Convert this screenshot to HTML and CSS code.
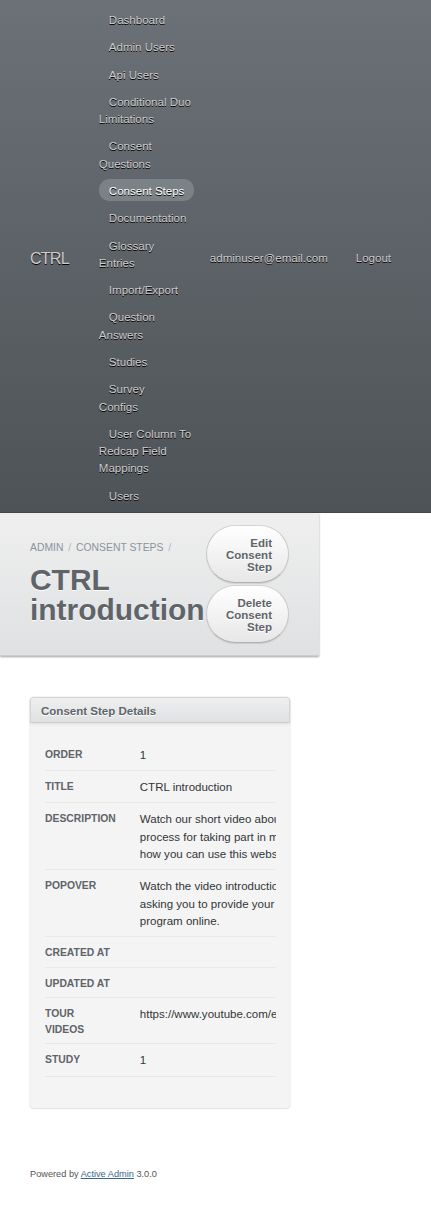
FILE: index.html
```
<!DOCTYPE html>
<html lang="en">
<head>
<meta charset="utf-8">
<title>CTRL introduction | CTRL</title>
<link rel="stylesheet" href="styles.css">
</head>
<body>
<div class="header">
  <h1 class="site-title">CTRL</h1>
  <ul class="tabs">
    <li><a href="#">Dashboard</a></li>
    <li><a href="#">Admin Users</a></li>
    <li><a href="#">Api Users</a></li>
    <li><a href="#">Conditional Duo Limitations</a></li>
    <li><a href="#">Consent Questions</a></li>
    <li class="current"><a href="#">Consent Steps</a></li>
    <li><a href="#">Documentation</a></li>
    <li><a href="#">Glossary Entries</a></li>
    <li><a href="#">Import/Export</a></li>
    <li><a href="#">Question Answers</a></li>
    <li><a href="#">Studies</a></li>
    <li><a href="#">Survey Configs</a></li>
    <li><a href="#">User Column To Redcap Field Mappings</a></li>
    <li><a href="#">Users</a></li>
  </ul>
  <ul class="utility-nav">
    <li><a href="#">adminuser@email.com</a></li>
    <li><a href="#">Logout</a></li>
  </ul>
</div>

<div class="title-bar">
  <div class="titlebar-left">
    <div class="breadcrumb"><a href="#">Admin</a> <span class="sep">/</span> <a href="#">Consent Steps</a> <span class="sep">/</span></div>
    <h2 class="page-title">CTRL introduction</h2>
  </div>
  <div class="action-items">
    <a class="button" href="#">Edit Consent Step</a>
    <a class="button" href="#">Delete Consent Step</a>
  </div>
</div>

<div class="main">
  <div class="panel">
    <h3 class="panel-title">Consent Step Details</h3>
    <div class="panel-body">
      <div class="attributes">
        <table>
          <tr><th>Order</th><td>1</td></tr>
          <tr><th>Title</th><td>CTRL introduction</td></tr>
          <tr><th>Description</th><td>Watch our short video about the research process for taking part in my programme, and how you can use this website.</td></tr>
          <tr><th>Popover</th><td>Watch the video introduction before we start asking you to provide your consent to join the program online.</td></tr>
          <tr><th>Created At</th><td></td></tr>
          <tr><th>Updated At</th><td></td></tr>
          <tr><th>Tour Videos</th><td>https://www.youtube.com/embed/4n8q2d6b0p3</td></tr>
          <tr><th>Study</th><td>1</td></tr>
        </table>
      </div>
    </div>
  </div>
</div>

<div class="footer">
  <p>Powered by <a href="#">Active Admin</a> 3.0.0</p>
</div>
</body>
</html>
```
FILE: styles.css
```
html, body {
  margin: 0;
  padding: 0;
}
body {
  font: 72%/150% "Liberation Sans", Arial, Helvetica, sans-serif;
  color: #323537;
  background: #ffffff;
}

/* Header */
.header {
  display: flex;
  align-items: center;
  padding: 12px 0 7px;
  background: linear-gradient(180deg, #6b7177 0%, #4e5357 100%);
  border-bottom: 1px solid #43474b;
}
.site-title {
  flex: none;
  margin: 0;
  padding: 0 30px;
  font-size: 1.4em;
  font-weight: normal;
  line-height: 150%;
  letter-spacing: -0.05em;
  color: #cdcdcd;
  text-shadow: #000 0 1px 0;
  white-space: nowrap;
}
.tabs {
  flex: none;
  width: 101px;
  list-style: none;
  margin: 0;
  padding: 0;
  display: flex;
  flex-direction: column;
  gap: 10px;
}
.tabs li {
  margin-right: 4px;
}
.tabs a {
  color: #cdcdcd;
  text-decoration: none;
  padding: 6px 10px 4px;
  border-radius: 10px;
  text-shadow: #000 0 1px 0;
}
.tabs li.current a {
  background: #7b8287;
  color: #ffffff;
}
.utility-nav {
  flex: 1;
  list-style: none;
  margin: 0;
  padding: 0 40px 0 0;
  display: flex;
  justify-content: flex-end;
  gap: 28px;
  white-space: nowrap;
}
.utility-nav a {
  color: #cdcdcd;
  text-decoration: none;
  text-shadow: #000 0 1px 0;
}

/* Title bar */
.title-bar {
  width: 319px;
  box-sizing: border-box;
  padding: 12px 30px;
  display: flex;
  align-items: center;
  background: linear-gradient(180deg, #efefef 0%, #dfe1e2 100%);
  border-bottom: 1px solid #cdcdcd;
  box-shadow: 0 1px 2px rgba(0, 0, 0, 0.37);
}
.titlebar-left {
  flex: 1;
  min-width: 0;
}
.breadcrumb {
  font-size: 0.9em;
  line-height: 10px;
  margin-bottom: 12px;
  color: #8a949e;
  text-transform: uppercase;
}
.breadcrumb a {
  color: #8a949e;
  text-decoration: none;
}
.breadcrumb .sep {
  margin: 0 2px;
  color: #b0b7be;
}
.page-title {
  margin: 0;
  font-size: 2.6em;
  line-height: 30px;
  font-weight: bold;
  color: #5e6469;
  text-shadow: #fff 0 1px 0;
}
.action-items {
  flex: 0 0 83px;
  display: flex;
  flex-direction: column;
  gap: 2px;
}
.button {
  display: block;
  box-sizing: border-box;
  width: 83px;
  padding: 11px 16px 9px;
  line-height: 12px;
  font-weight: bold;
  text-align: right;
  color: #5e6469;
  text-decoration: none;
  background: linear-gradient(180deg, #ffffff 0%, #e7e7e7 100%);
  border: 1px solid #c7c7c7;
  border-color: #d3d3d3 #c7c7c7 #b2b2b2;
  border-radius: 200px;
  box-shadow: 0 1px 1px rgba(0, 0, 0, 0.1), inset 0 1px 0 rgba(255, 255, 255, 0.8);
  text-shadow: #fff 0 1px 0;
}

/* Main content */
.main {
  width: 320px;
  box-sizing: border-box;
  padding: 41px 30px 0;
}
.panel {
  background: #f4f4f4;
  border-radius: 4px;
  box-shadow: 0 0 0 1px rgba(0, 0, 0, 0.03), 0 1px 2px rgba(0, 0, 0, 0.1);
  margin-bottom: 28px;
}
.panel-title {
  margin: 0;
  padding: 4px 10px 2px;
  font-size: 1em;
  line-height: 18px;
  font-weight: bold;
  color: #5e6469;
  text-shadow: #fff 0 1px 0;
  background: linear-gradient(180deg, #efefef 0%, #dfe1e2 100%);
  border: 1px solid #d6d6d6;
  border-bottom-color: #cdcdcd;
  border-radius: 4px 4px 0 0;
  box-shadow: 0 1px 3px rgba(0, 0, 0, 0.1);
}
.panel-body {
  padding: 16px 14px 31px 15px;
}
.attributes {
  overflow: hidden;
}
.attributes table {
  width: 100%;
  border-collapse: collapse;
  border-spacing: 0;
}
.attributes th,
.attributes td {
  vertical-align: top;
  text-align: left;
  border-bottom: 1px solid #e8e8e8;
}
.attributes th {
  padding: 8px 12px 6px 0;
  font-size: 0.9em;
  line-height: 150%;
  font-weight: bold;
  color: #5e6469;
  text-transform: uppercase;
}
.attributes td {
  padding: 8px 12px 6px;
}

/* Footer */
.footer {
  padding: 32px 30px 30px;
  font-size: 0.8em;
  line-height: 150%;
  color: #555555;
}
.footer p {
  margin: 0;
}
.footer a {
  color: #38678b;
}
```
